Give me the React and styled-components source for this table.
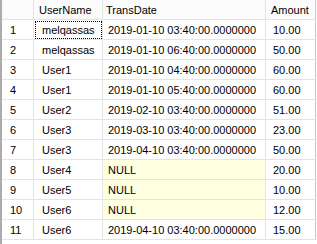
import React from 'react';
import styled, { createGlobalStyle } from 'styled-components';

const GlobalStyle = createGlobalStyle`
    html, body {
        margin: 0;
        padding: 0;
        background: #ffffff;
    }
    body {
        font-family: "Liberation Sans", Arial, sans-serif;
        font-size: 11px;
        color: #000000;
    }
`;

const GridPane = styled.div`
    width: 317px;
    height: 244px;
    box-sizing: border-box;
    border-left: 2px solid #acacac;
    background: #ffffff;
    overflow: hidden;
`;

const Row = styled.div`
    display: grid;
    grid-template-columns: 32px 69px 163px 50px;
    height: 20px;
`;

const Cell = styled.div`
    box-sizing: border-box;
    height: 20px;
    border-right: 1px solid ${p => (p.$last ? '#c9c9c9' : '#e4e4e4')};
    border-bottom: 1px solid #e4e4e4;
    padding-left: ${p => p.$pad}px;
    padding-top: ${p => (p.$head ? 2 : 1)}px;
    line-height: ${p => (p.$head ? 17 : 18)}px;
    white-space: nowrap;
    overflow: hidden;
    background: ${p => (p.$head ? '#fbfbfb' : p.$null ? '#ffffe1' : '#ffffff')};
    outline: ${p => (p.$focus ? '1px dotted #000000' : 'none')};
    outline-offset: -2px;
`;

const rows = [
    ['melqassas', '2019-01-10 03:40:00.0000000', '10.00'],
    ['melqassas', '2019-01-10 06:40:00.0000000', '50.00'],
    ['User1', '2019-01-10 04:40:00.0000000', '60.00'],
    ['User1', '2019-01-10 05:40:00.0000000', '60.00'],
    ['User2', '2019-02-10 03:40:00.0000000', '51.00'],
    ['User3', '2019-03-10 03:40:00.0000000', '23.00'],
    ['User3', '2019-04-10 03:40:00.0000000', '50.00'],
    ['User4', null, '20.00'],
    ['User5', null, '10.00'],
    ['User6', null, '12.00'],
    ['User6', '2019-04-10 03:40:00.0000000', '15.00'],
];

export default function App() {
    return (
        <>
            <GlobalStyle />
            <GridPane>
                <Row>
                    <Cell $head $pad={8} />
                    <Cell $head $pad={5}>UserName</Cell>
                    <Cell $head $pad={3}>TransDate</Cell>
                    <Cell $head $last $pad={5}>Amount</Cell>
                </Row>
                {rows.map(([user, date, amount], i) => (
                    <Row key={i}>
                        <Cell $pad={8}>{i + 1}</Cell>
                        <Cell $pad={8} $focus={i === 0}>{user}</Cell>
                        <Cell $pad={5} $null={date === null}>{date === null ? 'NULL' : date}</Cell>
                        <Cell $last $pad={7}>{amount}</Cell>
                    </Row>
                ))}
            </GridPane>
        </>
    );
}
